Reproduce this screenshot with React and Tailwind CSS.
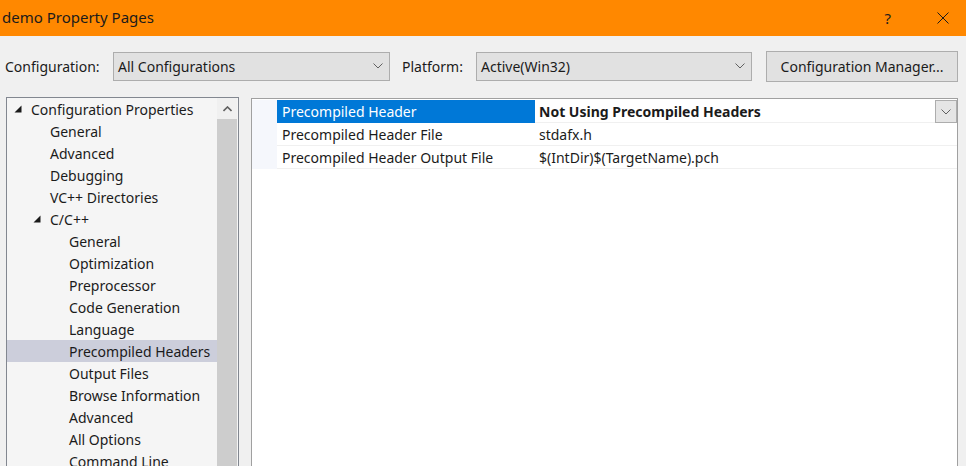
import React from "react";

const tree = [
  { label: "Configuration Properties", level: 0, open: true },
  { label: "General", level: 1 },
  { label: "Advanced", level: 1 },
  { label: "Debugging", level: 1 },
  { label: "VC++ Directories", level: 1 },
  { label: "C/C++", level: 1, open: true },
  { label: "General", level: 2 },
  { label: "Optimization", level: 2 },
  { label: "Preprocessor", level: 2 },
  { label: "Code Generation", level: 2 },
  { label: "Language", level: 2 },
  { label: "Precompiled Headers", level: 2, selected: true },
  { label: "Output Files", level: 2 },
  { label: "Browse Information", level: 2 },
  { label: "Advanced", level: 2 },
  { label: "All Options", level: 2 },
  { label: "Command Line", level: 2 },
];

const props = [
  { name: "Precompiled Header", value: "Not Using Precompiled Headers", active: true },
  { name: "Precompiled Header File", value: "stdafx.h" },
  { name: "Precompiled Header Output File", value: "$(IntDir)$(TargetName).pch" },
];

const indent = ["pl-[7px]", "pl-[43px]", "pl-[62px]"];

function Chevron({ className = "" }) {
  return (
    <svg width="10" height="6" viewBox="0 0 10 6" className={className}>
      <polyline points="0.5,0.5 5,5 9.5,0.5" fill="none" stroke="#606060" strokeWidth="1" />
    </svg>
  );
}

function Combo({ value, width }) {
  return (
    <div className={`${width} h-[29px] flex items-center justify-between bg-[#e1e1e1] border border-[#adadad] pl-[4px] pr-[6px]`}>
      <span>{value}</span>
      <Chevron />
    </div>
  );
}

export default function App() {
  return (
    <div
      className="w-[966px] h-[466px] overflow-hidden bg-[#f0f0f0] text-[#1b1b1b] text-[14px] flex flex-col"
      style={{ fontFamily: '"Noto Sans", sans-serif' }}
    >
      <div className="h-[36px] shrink-0 bg-[#ff8800] flex items-center pl-[2px] pr-[17px]">
        <span className="text-[15px] text-[#1b1b1b] flex-1 -mt-[1px]">demo Property Pages</span>
        <span className="text-[15px] mr-[46px]">?</span>
        <svg width="12" height="12" viewBox="0 0 12 12">
          <path d="M0.5 0.5 L11.5 11.5 M11.5 0.5 L0.5 11.5" stroke="#1b1b1b" strokeWidth="1" />
        </svg>
      </div>

      <div className="flex items-center pt-[15px] pl-[5px] h-[61px] shrink-0 pb-[16px]">
        <span className="w-[108px]">Configuration:</span>
        <Combo value="All Configurations" width="w-[277px]" />
        <span className="ml-[12px] w-[74px]">Platform:</span>
        <Combo value="Active(Win32)" width="w-[276px]" />
        <button className="ml-[14px] w-[192px] h-[31px] bg-[#e1e1e1] border border-[#adadad] text-center">
          Configuration Manager...
        </button>
      </div>

      <div className="flex flex-1 min-h-0 pl-[6px] pr-[8px]">
        <div className="w-[233px] border border-[#828790] border-b-0 bg-[#f5f5f5] flex">
          <div className="flex-1">
            {tree.map((t, i) => (
              <div
                key={i}
                className={`h-[22px] flex items-center whitespace-nowrap ${indent[t.level]} ${t.selected ? "bg-[#cccedb]" : ""}`}
              >
                {t.open && (
                  <svg width="8" height="8" viewBox="0 0 8 8" className={t.level === 0 ? "mr-[9px]" : "-ml-[17px] mr-[9px]"}>
                    <polygon points="7.5,0.5 7.5,7.5 0.5,7.5" fill="#1b1b1b" />
                  </svg>
                )}
                <span>{t.label}</span>
              </div>
            ))}
          </div>
          <div className="w-[20px] mr-[1px] flex flex-col bg-[#f0f0f0]">
            <div className="h-[21px] flex items-center justify-center">
              <svg width="9" height="6" viewBox="0 0 9 6">
                <polyline points="0.5,5 4.5,1 8.5,5" fill="none" stroke="#606060" strokeWidth="1.6" />
              </svg>
            </div>
            <div className="flex-1 bg-[#cdcdcd]" />
          </div>
        </div>

        <div className="ml-[12px] mt-[1px] flex-1 border border-[#a0a0a0] border-b-0 bg-white pt-[1px] relative">
          {props.map((p, i) => (
            <div key={i} className="flex h-[23px] items-stretch">
              <div className="w-[25px] bg-[#f5f7fc]" />
              <div
                className={`w-[258px] flex items-center pl-[5px] border-b ${p.active ? "bg-[#0078d7] text-white border-[#0078d7]" : "border-[#f0f0f0]"}`}
              >
                {p.name}
              </div>
              <div className={`flex-1 flex items-center pl-[4px] border-b border-[#f0f0f0] ${p.active ? "font-bold" : ""}`}>
                {p.value}
              </div>
            </div>
          ))}
          <div className="absolute right-0 top-[1px] w-[22px] h-[23px] bg-[#e5e5e5] border border-[#adadad] flex items-center justify-center">
            <Chevron />
          </div>
        </div>
      </div>
    </div>
  );
}
